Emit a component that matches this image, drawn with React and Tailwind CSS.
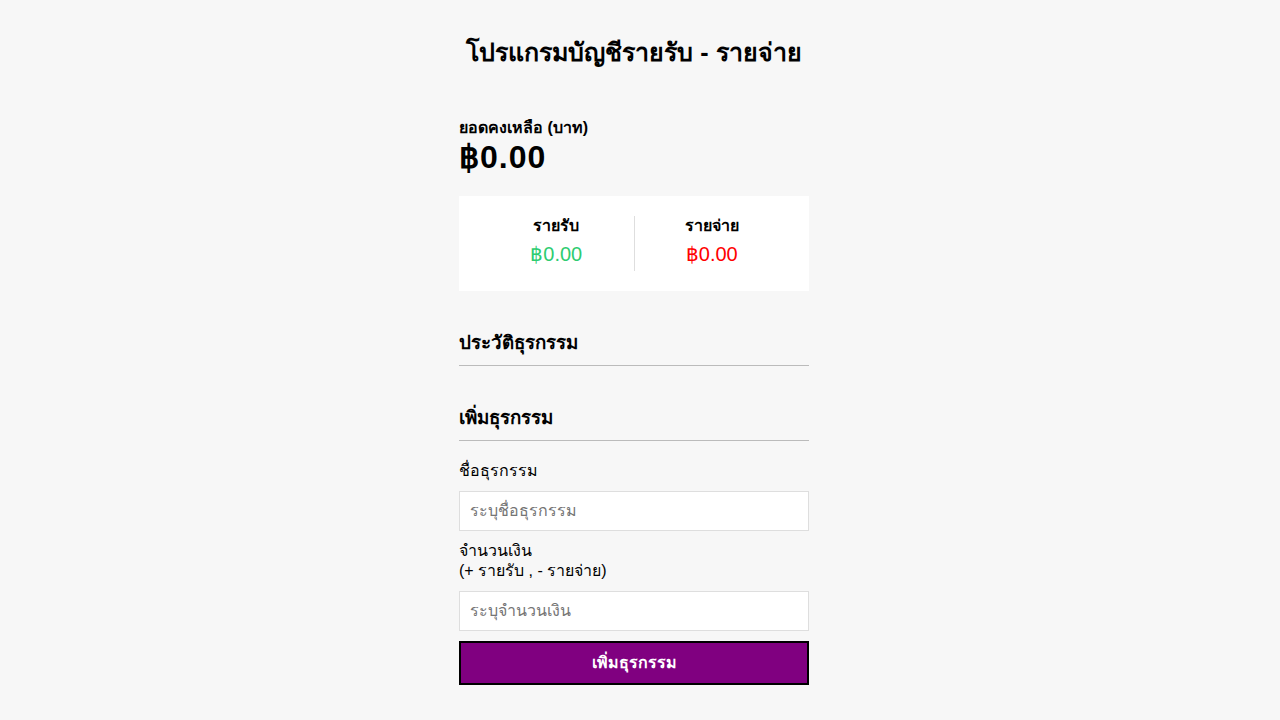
import { useState } from "react";

function App() {
  const [text, setText] = useState("");
  const [amount, setAmount] = useState("");

  return (
    <div className="min-h-screen w-full bg-[#f7f7f7] pr-[12px] font-['Liberation_Sans','Noto_Sans',sans-serif] text-black">
      <h2 className="whitespace-nowrap pt-[37px] text-center text-[25px] font-bold leading-[30px]">
        โปรแกรมบัญชีรายรับ - รายจ่าย
      </h2>

      <div className="mx-auto flex w-[350px] flex-col pb-[30px]">
        {/* balance */}
        <h4 className="mt-[51px] text-base font-bold leading-[20px]">ยอดคงเหลือ (บาท)</h4>
        <h1 className="text-[32px] font-bold leading-[38px] tracking-[1px]">฿0.00</h1>

        {/* income / expense */}
        <div className="mt-[20px] flex bg-white p-[20px]">
          <div className="flex-1 border-r border-[#dedede] text-center">
            <h4 className="text-base font-bold leading-[20px]">รายรับ</h4>
            <p className="mt-[5px] mb-[4px] text-[20px] leading-[26px] text-[#2ecc71]">฿0.00</p>
          </div>
          <div className="flex-1 text-center">
            <h4 className="text-base font-bold leading-[20px]">รายจ่าย</h4>
            <p className="mt-[5px] mb-[4px] text-[20px] leading-[26px] text-[#f00]">฿0.00</p>
          </div>
        </div>

        <h3 className="mt-[40px] border-b border-[#bbb] pb-[10px] text-[18.72px] font-bold leading-[24px]">
          ประวัติธุรกรรม
        </h3>
        <ul className="list-none p-0"></ul>

        <h3 className="mt-[40px] border-b border-[#bbb] pb-[10px] text-[18.72px] font-bold leading-[24px]">
          เพิ่มธุรกรรม
        </h3>

        <form className="mt-[20px] flex flex-col gap-[10px]" onSubmit={(e) => e.preventDefault()}>
          <label className="text-base leading-[20px]">ชื่อธุรกรรม</label>
          <input
            type="text"
            value={text}
            onChange={(e) => setText(e.target.value)}
            placeholder="ระบุชื่อธุรกรรม"
            className="block h-[40px] w-full border border-[#dedede] bg-white px-[10px] text-base leading-[18px] placeholder:text-[#757575] focus:outline-none"
          />
          <label className="text-base leading-[20px]">
            จำนวนเงิน
            <br />
            (+ รายรับ , - รายจ่าย)
          </label>
          <input
            type="number"
            value={amount}
            onChange={(e) => setAmount(e.target.value)}
            placeholder="ระบุจำนวนเงิน"
            className="block h-[40px] w-full border border-[#dedede] bg-white px-[10px] text-base leading-[18px] placeholder:text-[#757575] focus:outline-none"
          />
          <button className="block h-[44px] w-full border-2 border-black bg-[#800080] text-base font-bold leading-[20px] text-white">
            เพิ่มธุรกรรม
          </button>
        </form>
      </div>
    </div>
  );
}

export default App;
